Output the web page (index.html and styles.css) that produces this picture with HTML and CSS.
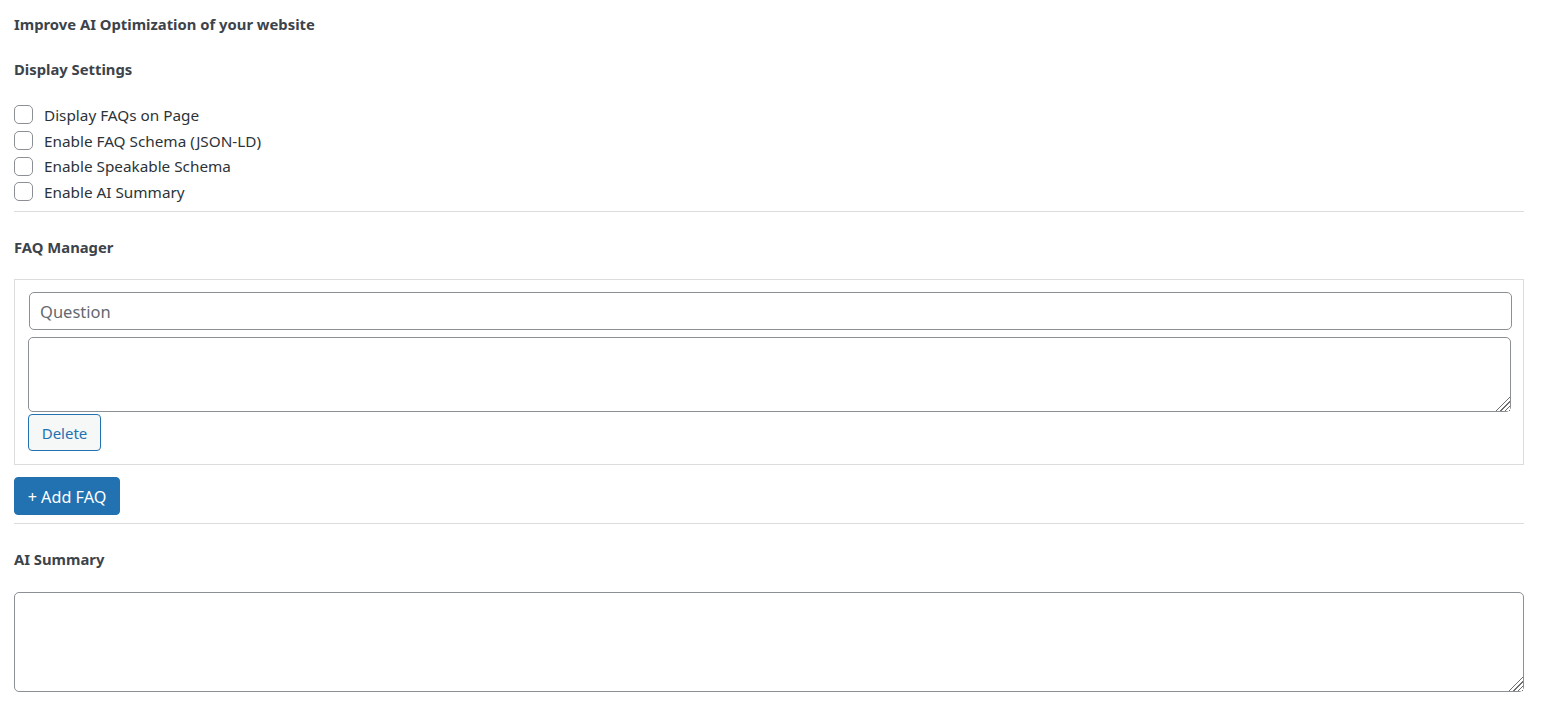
FILE: index.html
```html
<!DOCTYPE html>
<html>
<head>
<meta charset="utf-8">
<link rel="stylesheet" href="styles.css">
</head>
<body>
<div class="wrap">
  <p class="title">Improve AI Optimization of your website</p>
  <h3 class="section">Display Settings</h3>
  <div class="checks">
    <label class="check"><input type="checkbox" class="cb"><span>Display FAQs on Page</span></label>
    <label class="check"><input type="checkbox" class="cb"><span>Enable FAQ Schema (JSON-LD)</span></label>
    <label class="check"><input type="checkbox" class="cb"><span>Enable Speakable Schema</span></label>
    <label class="check"><input type="checkbox" class="cb"><span>Enable AI Summary</span></label>
  </div>
  <hr class="sep">
  <h3 class="section after-sep">FAQ Manager</h3>
  <div class="faq-box">
    <div class="faq-item">
      <input type="text" class="q-input" placeholder="Question">
      <textarea class="a-input"></textarea>
      <button class="btn-delete" type="button">Delete</button>
    </div>
  </div>
  <button class="btn-add" type="button">+ Add FAQ</button>
  <hr class="sep sep-b">
  <h3 class="section after-sep">AI Summary</h3>
  <textarea class="summary"></textarea>
</div>
</body>
</html>
```
FILE: styles.css
```css
html, body {
  margin: 0;
  padding: 0;
  background: #ffffff;
}
body {
  font-family: "Noto Sans", "Open Sans", sans-serif;
  color: #3c434a;
}
.wrap {
  padding: 14px 17px 0 14px;
}
.title {
  margin: 0;
  font-size: 14.8px;
  font-weight: 700;
  line-height: 21px;
}
.section {
  margin: 24px 0 0 0;
  font-size: 14.8px;
  font-weight: 700;
  line-height: 21px;
}
.section.after-sep {
  margin-top: 25px;
}
.checks {
  margin-top: 22px;
  display: flex;
  flex-direction: column;
}
.check {
  display: flex;
  align-items: center;
  gap: 11px;
  height: 25.7px;
  font-size: 15.3px;
  color: #2c3338;
}
.cb {
  appearance: none;
  -webkit-appearance: none;
  margin: 0;
  width: 19px;
  height: 19px;
  border: 1px solid #8c8f94;
  border-radius: 5px;
  background: #fff;
  box-sizing: border-box;
  flex: none;
}
.sep {
  border: 0;
  border-top: 1px solid #dcdcde;
  margin: 6px 0 0 0;
  height: 0;
}
.sep-b {
  margin-top: 8px;
}
.faq-box {
  margin-top: 21px;
  border: 1px solid #dcdcde;
  padding: 12px 12px 13px 13px;
}
.faq-item {
  display: flex;
  flex-direction: column;
  align-items: flex-start;
}
.q-input {
  box-sizing: border-box;
  width: 100%;
  margin: 0 0 0 1px;
  height: 38px;
  border: 1px solid #8c8f94;
  border-radius: 5px;
  padding: 2px 10px 0 10px;
  font-family: inherit;
  font-size: 16.5px;
  color: #2c3338;
  background: #fff;
  outline: none;
}
.q-input::placeholder {
  color: #646970;
}
.a-input {
  box-sizing: border-box;
  width: 100%;
  margin: 7px 0 0 0;
  height: 75px;
  border: 1px solid #8c8f94;
  border-radius: 5px;
  padding: 6px 10px;
  font-family: inherit;
  font-size: 15px;
  background: #fff;
  outline: none;
  display: block;
}
.btn-delete {
  margin-top: 2px;
  height: 37px;
  width: 73px;
  box-sizing: border-box;
  border: 1px solid #2271b1;
  border-radius: 4px;
  background: #f6f7f7;
  color: #2271b1;
  font-family: inherit;
  font-size: 15px;
  padding: 2px 0 0 0;
  cursor: pointer;
}
.btn-add {
  display: block;
  margin-top: 12px;
  height: 38px;
  width: 106px;
  box-sizing: border-box;
  border: 1px solid #2271b1;
  border-radius: 4px;
  background: #2271b1;
  color: #ffffff;
  font-family: inherit;
  font-size: 16.2px;
  padding: 2px 0 0 0;
  cursor: pointer;
}
.summary {
  display: block;
  box-sizing: border-box;
  width: 100%;
  margin-top: 22px;
  height: 100px;
  border: 1px solid #8c8f94;
  border-radius: 5px;
  padding: 6px 10px;
  font-family: inherit;
  font-size: 15px;
  background: #fff;
  outline: none;
}
.a-input::-webkit-resizer,
.summary::-webkit-resizer {
  background:
    linear-gradient(135deg, #ffffff 52%, transparent 52%),
    repeating-linear-gradient(135deg, #ffffff 0 2px, #6e6e6e 2px 3px);
}
```
